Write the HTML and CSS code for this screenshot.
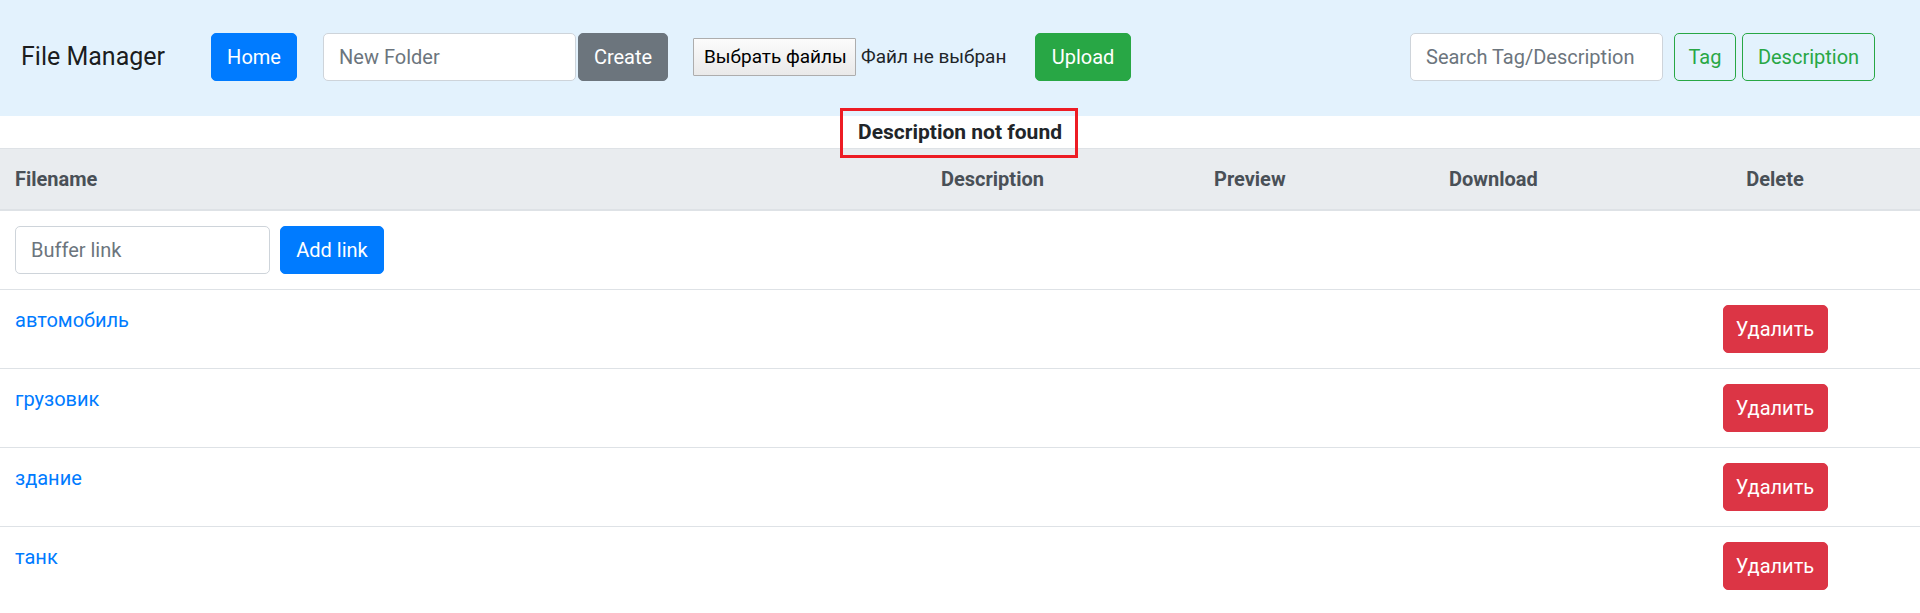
FILE: index.html
```html
<!DOCTYPE html>
<html lang="ru">
<head>
<meta charset="utf-8">
<title>File Manager</title>
<link rel="stylesheet" href="styles.css">
</head>
<body>
<nav class="navbar">
  <a class="brand" href="#">File Manager</a>
  <a class="btn btn-primary btn-home" href="#">Home</a>
  <form class="folder-form">
    <input class="form-control folder-input" type="text" placeholder="New Folder">
    <button class="btn btn-secondary" type="button">Create</button>
  </form>
  <form class="upload-form">
    <span class="file-input">
      <span class="file-btn">Выбрать файлы</span>
      <span class="file-label">Файл не выбран</span>
    </span>
    <button class="btn btn-success" type="button">Upload</button>
  </form>
  <form class="search-form">
    <input class="form-control search-input" type="text" placeholder="Search Tag/Description">
    <button class="btn btn-outline-success" type="button">Tag</button>
    <button class="btn btn-outline-success" type="button">Description</button>
  </form>
</nav>

<div class="status">
  <span class="status-text">Description not found</span>
</div>

<table class="table">
  <colgroup>
    <col class="col-name">
    <col class="col-desc">
    <col class="col-preview">
    <col class="col-download">
    <col class="col-delete">
  </colgroup>
  <thead>
    <tr>
      <th>Filename</th>
      <th>Description</th>
      <th>Preview</th>
      <th>Download</th>
      <th class="center">Delete</th>
    </tr>
  </thead>
  <tbody>
    <tr>
      <td>
        <form class="link-form">
          <input class="form-control link-input" type="text" placeholder="Buffer link">
          <button class="btn btn-primary" type="button">Add link</button>
        </form>
      </td>
      <td></td><td></td><td></td><td></td>
    </tr>
    <tr>
      <td><a class="file-link" href="#">автомобиль</a></td>
      <td></td><td></td><td></td>
      <td class="center"><button class="btn btn-danger" type="button">Удалить</button></td>
    </tr>
    <tr>
      <td><a class="file-link" href="#">грузовик</a></td>
      <td></td><td></td><td></td>
      <td class="center"><button class="btn btn-danger" type="button">Удалить</button></td>
    </tr>
    <tr>
      <td><a class="file-link" href="#">здание</a></td>
      <td></td><td></td><td></td>
      <td class="center"><button class="btn btn-danger" type="button">Удалить</button></td>
    </tr>
    <tr>
      <td><a class="file-link" href="#">танк</a></td>
      <td></td><td></td><td></td>
      <td class="center"><button class="btn btn-danger" type="button">Удалить</button></td>
    </tr>
  </tbody>
</table>
</body>
</html>
```

FILE: styles.css
```css
* { box-sizing: border-box; }

html, body {
  margin: 0;
  padding: 0;
}

body {
  font-family: Roboto, "Segoe UI", "Liberation Sans", sans-serif;
  font-size: 20px;
  line-height: 30px;
  color: #212529;
  background: #fff;
}

form { margin: 0; }

/* ---------- navbar ---------- */
.navbar {
  display: flex;
  align-items: center;
  height: 116px;
  padding: 33px 45px 35px 21px;
  background: #e3f2fd;
}

.brand {
  font-size: 25px;
  line-height: 38px;
  color: rgba(0, 0, 0, 0.9);
  text-decoration: none;
  margin-right: 46px;
}

.btn {
  display: inline-flex;
  align-items: center;
  justify-content: center;
  height: 48px;
  padding: 0 15px;
  font-family: inherit;
  font-size: 20px;
  line-height: 30px;
  font-weight: 400;
  border: 1px solid transparent;
  border-radius: 5px;
  text-decoration: none;
  cursor: pointer;
  white-space: nowrap;
}

.btn-primary { background: #007bff; border-color: #007bff; color: #fff; }
.btn-secondary { background: #6c757d; border-color: #6c757d; color: #fff; }
.btn-success { background: #28a745; border-color: #28a745; color: #fff; }
.btn-danger { background: #dc3545; border-color: #dc3545; color: #fff; }
.btn-outline-success { background: transparent; border-color: #28a745; color: #28a745; }

.btn-home { width: 86px; }

.form-control {
  height: 48px;
  padding: 0 15px;
  font-family: inherit;
  font-size: 20px;
  color: #495057;
  background: #fff;
  border: 1px solid #ced4da;
  border-radius: 5px;
}
.form-control::placeholder { color: #6c757d; }

.folder-form {
  display: flex;
  align-items: center;
  gap: 2px;
  margin-left: 26px;
}
.folder-input { width: 253px; }
.folder-form .btn { width: 90px; }

.upload-form {
  display: flex;
  align-items: center;
  margin-left: 25px;
}

.file-input {
  display: flex;
  align-items: center;
  gap: 5px;
  font-size: 19px;
  color: #212529;
}

.file-btn {
  display: inline-flex;
  align-items: center;
  height: 38px;
  width: 163px;
  padding: 0 10px;
  border: 1px solid #adadad;
  border-radius: 1px;
  background: linear-gradient(#fbfbfb, #e9e9e9);
  color: #000;
  white-space: nowrap;
}

.file-label {
  width: 148px;
  white-space: nowrap;
}

.upload-form .btn {
  width: 96px;
  margin-left: 26px;
}

.search-form {
  display: flex;
  align-items: center;
  margin-left: auto;
}
.search-input { width: 253px; }
.search-form .btn:nth-of-type(1) { width: 62px; margin-left: 11px; }
.search-form .btn:nth-of-type(2) { width: 133px; margin-left: 6px; }

/* ---------- status ---------- */
.status {
  text-align: center;
  height: 32px;
  line-height: 32px;
}

.status-text {
  position: relative;
  display: inline-block;
  font-weight: 700;
  font-size: 21px;
}

.status-text::after {
  content: "";
  position: absolute;
  left: -18px;
  right: -16px;
  top: -8px;
  bottom: -10px;
  border: 3px solid #ed1c24;
  z-index: 2;
}

/* ---------- table ---------- */
.table {
  width: 100%;
  border-collapse: collapse;
  table-layout: fixed;
}

.col-name { width: 926px; }
.col-desc { width: 273px; }
.col-preview { width: 235px; }
.col-download { width: 196px; }
.col-delete { width: 290px; }

.table th,
.table td {
  padding: 15px;
  border-top: 1px solid #dee2e6;
  vertical-align: top;
  text-align: left;
  line-height: 30px;
}

.table thead th {
  background: #e9ecef;
  color: #495057;
  font-weight: 700;
  border-bottom: 2px solid #dee2e6;
  vertical-align: bottom;
}

.table .center { text-align: center; }

.link-form {
  display: flex;
  align-items: center;
  gap: 10px;
}
.link-input { width: 255px; }
.link-form .btn { width: 104px; }

.file-link {
  color: #007bff;
  text-decoration: none;
}

.btn-danger { width: 105px; }
```
